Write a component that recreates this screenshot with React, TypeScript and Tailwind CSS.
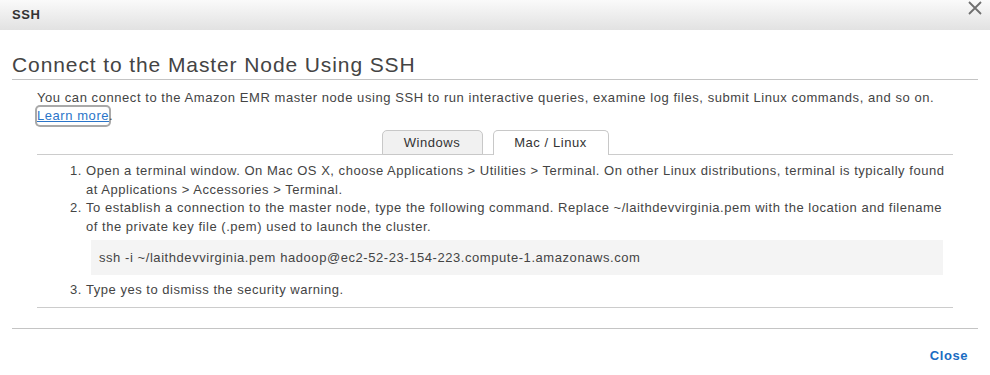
import React from "react";

export default function App() {
  return (
    <div className="w-[990px] h-[375px] bg-white text-[#444] font-['Liberation_Sans',Arial,sans-serif] tracking-[0.56px] overflow-hidden">
      {/* Header */}
      <div className="h-[30px] flex items-center justify-between pl-[12px] pr-[8px] bg-gradient-to-b from-[#fafafa] to-[#e2e2e2]">
        <span className="text-[13px] font-bold text-[#333]">SSH</span>
        <svg width="14" height="14" viewBox="0 0 14 14" className="mb-[14px]">
          <path d="M1 1 L13 13 M13 1 L1 13" stroke="#6f6f6f" strokeWidth="1.8" fill="none" />
        </svg>
      </div>

      <div className="px-[12px]">
        <h1 className="mt-[23px] text-[21px] leading-[24px] tracking-[0.9px] text-[#444] pb-[2px] border-b border-[#c4c4c4]">
          Connect to the Master Node Using SSH
        </h1>

        <div className="px-[25px]">
          <p className="mt-[9px] text-[13px] leading-[18px]">
            You can connect to the Amazon EMR master node using SSH to run interactive queries, examine log files, submit Linux commands, and so on.
            <br />
            <span className="inline-block rounded-[3px] shadow-[0_0_0_2px_#a9a9a9]">
              <a href="#" className="text-[#2b75c9] underline">Learn more</a>
            </span>
            .
          </p>

          {/* Tabs */}
          <div className="mt-[5px] flex justify-center gap-[10px] border-b border-[#cccccc]">
            <div className="-mb-px h-[25px] w-[101px] flex items-start justify-center border border-[#c8c8c8] rounded-t-[5px] bg-[#f1f1f1] text-[13px] leading-[23px] text-[#333]">
              Windows
            </div>
            <div className="-mb-px h-[25px] w-[116px] flex items-start justify-center border border-b-0 border-[#c8c8c8] rounded-t-[5px] bg-white text-[13px] leading-[24px] text-[#333]">
              Mac / Linux
            </div>
          </div>

          {/* Panel */}
          <div className="pt-[7px] pb-[7px] border-b border-[#cccccc]">
            <ol className="list-decimal pl-[49px] pr-[2px] text-[13px] leading-[18.6px] tracking-[0.52px]">
              <li>
                Open a terminal window. On Mac OS X, choose Applications &gt; Utilities &gt; Terminal. On other Linux distributions, terminal is typically found
                <br />
                at Applications &gt; Accessories &gt; Terminal.
              </li>
              <li>
                To establish a connection to the master node, type the following command. Replace ~/laithdevvirginia.pem with the location and filename
                <br />
                of the private key file (.pem) used to launch the cluster.
                <div className="mt-[4px] mb-[6px] ml-[5px] mr-[8px] h-[35px] flex items-center pl-[8px] bg-[#f4f4f4] tracking-[0.56px]">
                  ssh -i ~/laithdevvirginia.pem hadoop@ec2-52-23-154-223.compute-1.amazonaws.com
                </div>
              </li>
              <li>Type yes to dismiss the security warning.</li>
            </ol>
          </div>
        </div>

        <div className="mt-[20px] border-t border-[#c4c4c4]" />

        <div className="mt-[18px] flex justify-end pr-[10px]">
          <a href="#" className="text-[13px] leading-[18px] font-bold text-[#1a6cc2]">Close</a>
        </div>
      </div>
    </div>
  );
}
